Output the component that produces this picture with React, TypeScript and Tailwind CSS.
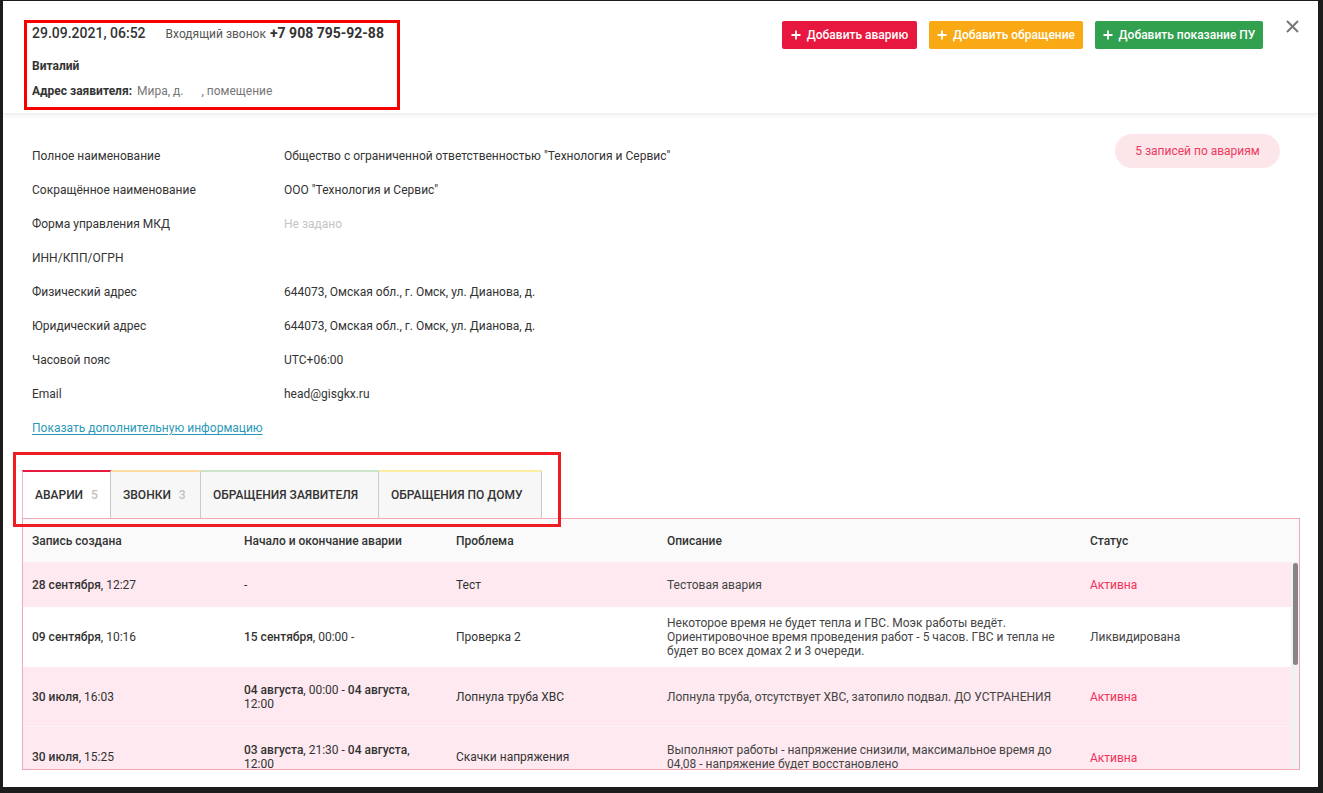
import React from "react";

const info = [
  { label: "Полное наименование", value: 'Общество с ограниченной ответственностью "Технология и Сервис"' },
  { label: "Сокращённое наименование", value: 'ООО "Технология и Сервис"' },
  { label: "Форма управления МКД", value: "Не задано", muted: true },
  { label: "ИНН/КПП/ОГРН", value: "" },
  { label: "Физический адрес", value: "644073, Омская обл., г. Омск, ул. Дианова, д." },
  { label: "Юридический адрес", value: "644073, Омская обл., г. Омск, ул. Дианова, д." },
  { label: "Часовой пояс", value: "UTC+06:00" },
  { label: "Email", value: "head@gisgkx.ru" },
];

const tabs = [
  { title: "Аварии", count: "5", w: "w-[89px]", top: "border-t-[#e8193f]", bg: "bg-white", left: "border-l-[#f4b7c3]" },
  { title: "Звонки", count: "3", w: "w-[90px]", top: "border-t-[#fcdca0]", bg: "bg-[#f7f7f7]", left: "border-l-transparent" },
  { title: "Обращения заявителя", count: "", w: "w-[178px]", top: "border-t-[#cde4cd]", bg: "bg-[#f7f7f7]", left: "border-l-transparent" },
  { title: "Обращения по дому", count: "", w: "w-[163px]", top: "border-t-[#fbeea0]", bg: "bg-[#f7f7f7]", left: "border-l-transparent" },
];

type Row = {
  created: [string, string];
  period: React.ReactNode;
  problem: string;
  desc: string;
  status: string;
  active: boolean;
  pink: boolean;
  h: string;
};

const rows: Row[] = [
  {
    created: ["28 сентября", ", 12:27"],
    period: "-",
    problem: "Тест",
    desc: "Тестовая авария",
    status: "Активна",
    active: true,
    pink: true,
    h: "h-[45px]",
  },
  {
    created: ["09 сентября", ", 10:16"],
    period: (
      <>
        <b className="font-medium">15 сентября</b>, 00:00 -
      </>
    ),
    problem: "Проверка 2",
    desc: "Некоторое время не будет тепла и ГВС. Моэк работы ведёт. Ориентировочное время проведения работ - 5 часов. ГВС и тепла не будет во всех домах 2 и 3 очереди.",
    status: "Ликвидирована",
    active: false,
    pink: false,
    h: "h-[60px]",
  },
  {
    created: ["30 июля", ", 16:03"],
    period: (
      <>
        <b className="font-medium">04 августа</b>, 00:00 - <b className="font-medium">04 августа</b>, 12:00
      </>
    ),
    problem: "Лопнула труба ХВС",
    desc: "Лопнула труба, отсутствует ХВС, затопило подвал. ДО УСТРАНЕНИЯ",
    status: "Активна",
    active: true,
    pink: true,
    h: "h-[60px]",
  },
  {
    created: ["30 июля", ", 15:25"],
    period: (
      <>
        <b className="font-medium">03 августа</b>, 21:30 - <b className="font-medium">04 августа</b>, 12:00
      </>
    ),
    problem: "Скачки напряжения",
    desc: "Выполняют работы - напряжение снизили, максимальное время до 04,08 - напряжение будет восстановлено",
    status: "Активна",
    active: true,
    pink: true,
    h: "h-[60px]",
  },
];

function Plus() {
  return (
    <svg width="10" height="10" viewBox="0 0 10 10" className="shrink-0">
      <path d="M5 0.5v9M0.5 5h9" stroke="white" strokeWidth="1.8" />
    </svg>
  );
}

export default function App() {
  return (
    <div
      className="w-[1323px] h-[793px] bg-[#1c1c1c] pl-[3px] pt-[1px] pr-[5px] pb-[6px] text-[#333]"
      style={{ fontFamily: 'Roboto, "Liberation Sans", sans-serif' }}
    >
      <div className="h-full bg-white flex flex-col overflow-hidden">
        {/* header */}
        <div className="h-[113px] shrink-0 flex items-start justify-between pl-[21px] pt-[19px] pr-[19px] border-b border-[#eeeeee] shadow-[0_2px_4px_rgba(0,0,0,0.05)] relative z-10">
          <div className="w-[376px] h-[90px] border-[3px] border-[#f70000] pl-[5px] text-[12px]">
            <div className="flex items-baseline leading-[20px]">
              <span className="text-[14px] font-medium text-[#333]">29.09.2021, 06:52</span>
              <span className="ml-[20px] text-[#555]">Входящий звонок</span>
              <span className="ml-[4px] text-[14px] font-bold text-[#333]">+7 908 795-92-88</span>
            </div>
            <div className="mt-[12px] leading-[20px] font-bold">Виталий</div>
            <div className="mt-[5px] leading-[20px]">
              <span className="font-bold">Адрес заявителя:</span>
              <span className="ml-[5px] text-[#777]">Мира, д.</span>
              <span className="ml-[18px] text-[#777]">, помещение</span>
            </div>
          </div>
          <div className="flex items-start">
            <div className="flex gap-[12px] pt-[1px]">
              <button className="h-[28px] w-[135px] rounded-[2px] bg-[#e8173f] text-white text-[12px] font-medium flex items-center justify-center gap-[6px]">
                <Plus />
                Добавить аварию
              </button>
              <button className="h-[28px] w-[154px] rounded-[2px] bg-[#f9a914] text-white text-[12px] font-medium flex items-center justify-center gap-[6px]">
                <Plus />
                Добавить обращение
              </button>
              <button className="h-[28px] w-[168px] rounded-[2px] bg-[#31a04f] text-white text-[12px] font-medium flex items-center justify-center gap-[6px]">
                <Plus />
                Добавить показание ПУ
              </button>
            </div>
            <svg width="13" height="13" viewBox="0 0 13 13" className="ml-[23px]">
              <path d="M1 1l11 11M12 1L1 12" stroke="#777" strokeWidth="2" />
            </svg>
          </div>
        </div>

        {/* body */}
        <div className="flex-1 min-h-0 flex flex-col pl-[19px] pr-[18px] pt-[25px] pb-[17px] text-[12px]">
          <div className="flex justify-between pl-[10px] shrink-0">
            <div>
              {info.map((r) => (
                <div key={r.label} className="h-[34px] flex items-center">
                  <div className="w-[252px] shrink-0">{r.label}</div>
                  <div className={r.muted ? "text-[#c4c4c4]" : "text-[#333]"}>{r.value}</div>
                </div>
              ))}
              <div className="h-[34px] flex items-center">
                <a className="text-[#2a9ab8] underline underline-offset-2 cursor-pointer">Показать дополнительную информацию</a>
              </div>
            </div>
            <div className="mr-[20px] -mt-[5px] h-[34px] w-[165px] rounded-full bg-[#fde6ea] text-[#ec3a5e] flex items-center justify-center">
              5 записей по авариям
            </div>
          </div>

          {/* tabs */}
          <div className="mt-[25px] flex relative shrink-0">
            {tabs.map((t, i) => (
              <div
                key={t.title}
                className={`${t.w} ${t.bg} ${t.top} ${t.left} h-[48px] border-t-2 border-l border-r-[1.5px] border-r-[#c9c9c9] ${i > 0 ? "border-l-0" : ""} flex items-center pl-[12px] font-medium uppercase text-[#333]`}
              >
                {t.title}
                {t.count && <span className="ml-[8px] text-[#c0c0c0]">{t.count}</span>}
              </div>
            ))}
            <div className="absolute -left-[9px] -top-[18px] w-[548px] h-[75px] border-[3px] border-[#ee1c25] pointer-events-none z-10" />
          </div>

          {/* table */}
          <div className="flex-1 min-h-0 border border-[#f4a7b6] flex flex-col overflow-hidden">
            <div className="h-[43px] shrink-0 bg-[#fafafa] flex items-center font-medium">
              <div className="w-[212px] shrink-0 pl-[9px]">Запись создана</div>
              <div className="w-[212px] shrink-0 pl-[9px]">Начало и окончание аварии</div>
              <div className="w-[211px] shrink-0 pl-[9px]">Проблема</div>
              <div className="w-[423px] shrink-0 pl-[9px]">Описание</div>
              <div className="flex-1 pl-[9px]">Статус</div>
            </div>
            <div className="flex-1 min-h-0 flex overflow-hidden">
              <div className="flex-1 min-h-0 overflow-hidden">
                {rows.map((r, i) => (
                  <div
                    key={i}
                    className={`${r.h} flex items-center leading-[14px] ${r.pink ? "bg-[#fde9ef]" : "bg-white"} ${i === 2 ? "border-b border-[#fdf2f5]" : ""}`}
                  >
                    <div className="w-[212px] shrink-0 pl-[9px]">
                      <b className="font-medium">{r.created[0]}</b>
                      {r.created[1]}
                    </div>
                    <div className="w-[212px] shrink-0 pl-[9px] pr-[22px]">{r.period}</div>
                    <div className="w-[211px] shrink-0 pl-[9px]">{r.problem}</div>
                    <div className="w-[423px] shrink-0 pl-[9px] pr-[14px] text-[#444]">{r.desc}</div>
                    <div className={`flex-1 pl-[9px] ${r.active ? "text-[#f0325a]" : "text-[#444]"} ${i === 3 ? "pt-[2px]" : ""}`}>
                      {r.status}
                    </div>
                  </div>
                ))}
              </div>
              <div className="w-[8px] shrink-0 bg-[#f1f1f1] pt-[1px]">
                <div className="mx-auto w-[5px] h-[102px] rounded-[3px] bg-[#858585]" />
              </div>
            </div>
          </div>
        </div>
      </div>
    </div>
  );
}
